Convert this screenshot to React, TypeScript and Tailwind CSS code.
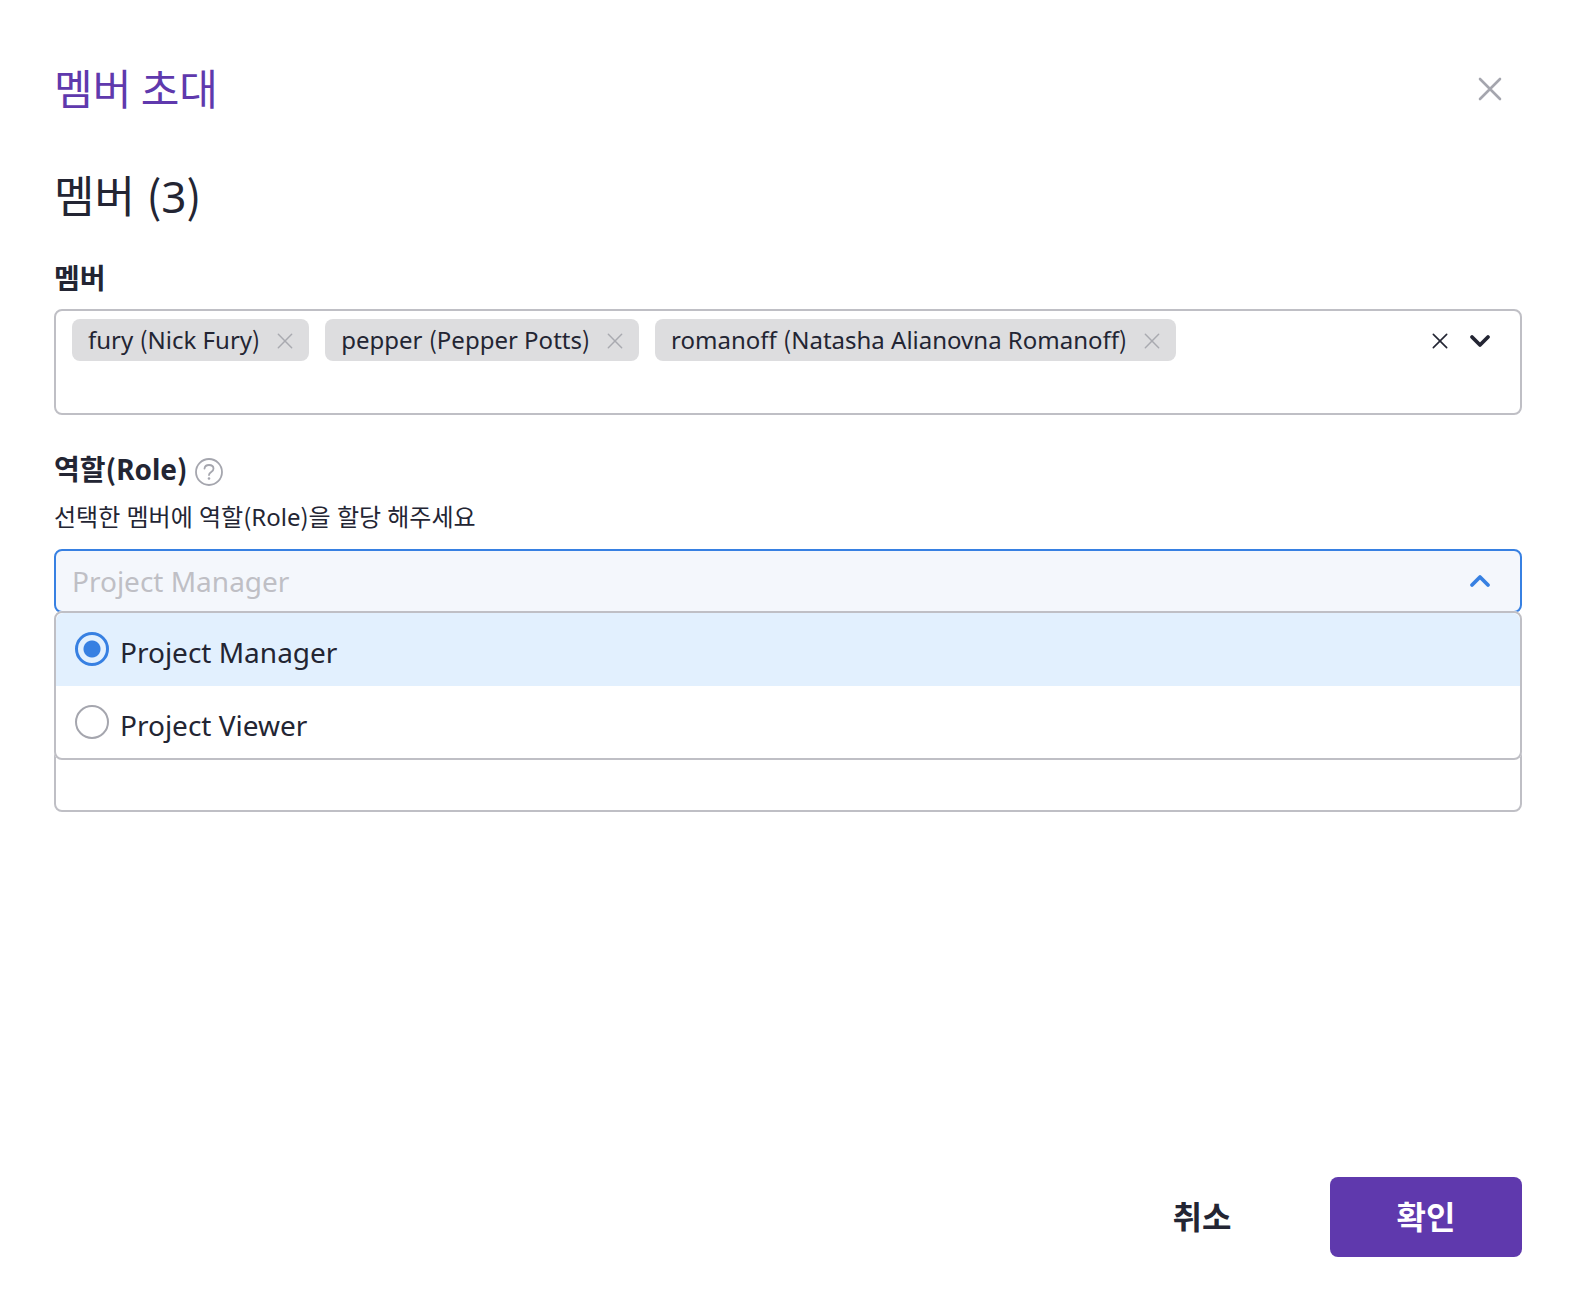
import { useState } from "react";

const MEMBERS = [
  "fury (Nick Fury)",
  "pepper (Pepper Potts)",
  "romanoff (Natasha Alianovna Romanoff)",
];
const ROLES = ["Project Manager", "Project Viewer"];

function Cross({ className, strokeWidth }: { className: string; strokeWidth: number }) {
  return (
    <svg
      viewBox="0 0 24 24"
      className={className}
      fill="none"
      stroke="currentColor"
      strokeWidth={strokeWidth}
      strokeLinecap="round"
      aria-hidden="true"
    >
      <path d="M2 2 22 22M22 2 2 22" />
    </svg>
  );
}

function Chevron({ className, d }: { className: string; d: string }) {
  return (
    <svg
      viewBox="0 0 22 14"
      className={className}
      fill="none"
      stroke="currentColor"
      strokeWidth="3.8"
      strokeLinecap="round"
      strokeLinejoin="round"
      aria-hidden="true"
    >
      <path d={d} />
    </svg>
  );
}

/* Sets parentheses in the Korean face and leaves the rest in the Latin one. */
function Mixed({ text }: { text: string }) {
  return (
    <span className="whitespace-pre-wrap">
      {text.split(/([()])/).map((part, i) =>
        part === "(" || part === ")" ? (
          <span key={i} className="font-['Noto_Sans_CJK_KR',sans-serif] leading-none">
            {part}
          </span>
        ) : (
          part
        ),
      )}
    </span>
  );
}

export default function App() {
  const [members, setMembers] = useState(MEMBERS);
  const [role, setRole] = useState("Project Manager");

  return (
    <main className="flex min-h-screen flex-col bg-white pt-[57px] pr-[60px] pb-[57px] pl-[54px] font-['Noto_Sans','Noto_Sans_CJK_KR',sans-serif] text-[#232533]">
      <header className="flex items-center justify-between">
        <h1 className="pb-1 font-['Noto_Sans_CJK_KR',sans-serif] text-[42px] leading-[60px] text-[#5f39ad]">멤버 초대</h1>
        <button type="button" aria-label="닫기" className="flex size-16 items-center justify-center text-[#a5a6ae]">
          <Cross className="size-6" strokeWidth={2.6} />
        </button>
      </header>

      <h2 className="mt-[43px] text-[44px] leading-[64px]">
        <Mixed text={`멤버 (${members.length})`} />
      </h2>

      <label htmlFor="member" className="mt-[30px] self-start text-[28px] leading-[40px] font-bold">
        멤버
      </label>
      <div className="mt-[11px] flex min-h-[106px] items-start rounded-lg border-2 border-[#bfbfc5] px-4 pt-2">
        <div className="flex flex-1 flex-wrap gap-x-4">
          {members.map((name) => (
            <span key={name} className="flex h-[42px] items-center gap-[17px] rounded-lg bg-[#dddddf] px-4 text-[24px] leading-[32px]">
              <Mixed text={name} />
              <button
                type="button"
                aria-label={`${name} 삭제`}
                onClick={() => setMembers(members.filter((m) => m !== name))}
                className="flex h-[18px] w-4 items-end justify-center text-[#a9aab0]"
              >
                <Cross className="size-4" strokeWidth={2.2} />
              </button>
            </span>
          ))}
          <input id="member" type="text" className="h-[42px] w-4 flex-1 text-[24px] outline-none" />
        </div>
        <div className="flex h-[44px] items-center gap-5 pr-[13px]">
          <button type="button" aria-label="모두 지우기" onClick={() => setMembers([])} className="flex w-[18px] items-center justify-center">
            <Cross className="size-4" strokeWidth={2.4} />
          </button>
          <button type="button" aria-label="멤버 목록 열기">
            <Chevron className="h-[14px] w-[22px]" d="M3 3 11 11 19 3" />
          </button>
        </div>
      </div>

      <div className="mt-[34px] flex items-center gap-[7px]">
        <label htmlFor="role" className="text-[28px] leading-[40px] font-bold">
          <Mixed text="역할(Role)" />
        </label>
        <button type="button" aria-label="도움말" className="pt-[6px] text-[#a5a6ae]">
          <svg viewBox="0 0 28 28" className="size-7" fill="none" stroke="currentColor" strokeWidth="1.8" strokeLinecap="round" aria-hidden="true">
            <circle cx="14" cy="14" r="13" />
            <path d="M9.5 10.6C9.8 8.2 11.6 7 14 7c2.600 0 4.500 1.500 4.500 3.700 0 3.300-4.500 3.100-4.500 6.300" />
            <circle cx="14" cy="20.500" r="1.300" fill="currentColor" stroke="none" />
          </svg>
        </button>
      </div>
      <p className="mt-3 text-[24px] leading-[32px]">
        <Mixed text="선택한 멤버에 역할(Role)을 할당 해주세요" />
      </p>

      <div className="relative mt-4">
        <div className="flex h-16 items-center rounded-lg border-2 border-[#3780e2] bg-[#f4f7fc] pr-[29px] pl-4">
          <input
            id="role"
            type="text"
            role="combobox"
            aria-expanded="true"
            aria-controls="role-options"
            placeholder="Project Manager"
            className="min-w-0 flex-1 text-[28px] leading-[40px] outline-none placeholder:text-[#bfbfc5]"
          />
          <button type="button" aria-label="역할 목록 닫기" className="text-[#3780e2]">
            <Chevron className="h-[14px] w-[22px]" d="M3 11 11 3 19 11" />
          </button>
        </div>
        <fieldset
          id="role-options"
          aria-label="역할(Role)"
          className="absolute inset-x-0 top-[62px] z-10 h-[149px] overflow-hidden rounded-lg border-2 border-[#bfbfc5] bg-white"
        >
          {ROLES.map((name) => (
            <label
              key={name}
              className="flex h-[73px] items-start gap-[11px] pt-[19px] pl-[19px] text-[28px] leading-[40px] has-checked:bg-[#e2f0fe]"
            >
              <input
                type="radio"
                name="role-option"
                checked={role === name}
                onChange={() => setRole(name)}
                className="size-[34px] appearance-none rounded-full border-2 border-[#a5a6ae] bg-white checked:border-[3px] checked:border-[#3780e2] checked:bg-[radial-gradient(circle,#3780e2_8px,#e2f0fe_9px)]"
              />
              {name}
            </label>
          ))}
        </fieldset>
      </div>
      <div role="list" aria-label="선택한 역할" className="mt-[93px] h-[106px] rounded-lg border-2 border-[#bfbfc5]" />

      <footer className="mt-auto flex justify-end gap-8">
        <button type="button" className="h-20 w-48 rounded-lg text-[32px] font-bold">
          취소
        </button>
        <button type="button" className="h-20 w-48 rounded-lg bg-[#5f39ad] text-[32px] font-bold text-white">
          확인
        </button>
      </footer>
    </main>
  );
}
